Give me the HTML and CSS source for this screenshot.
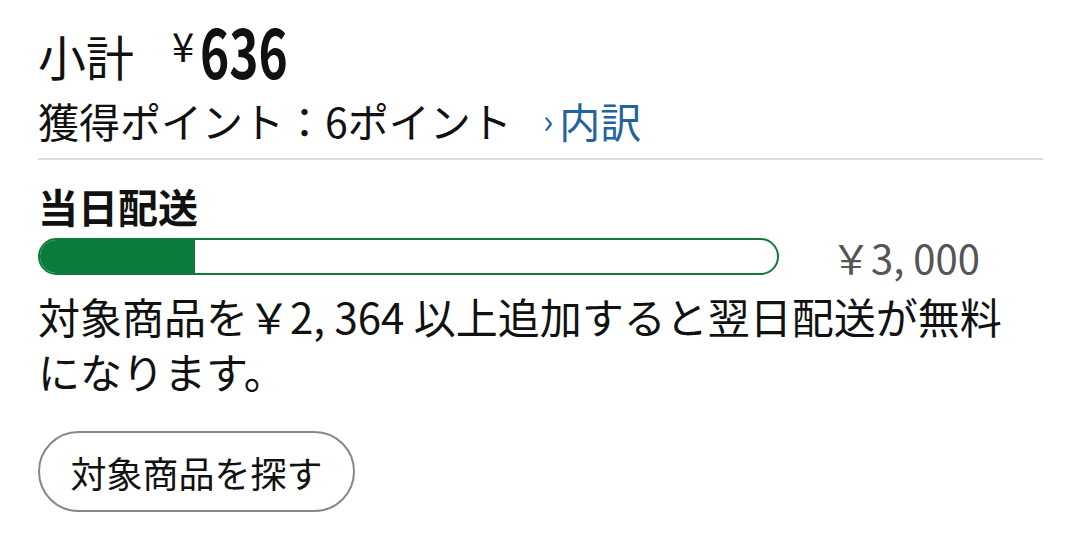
FILE: index.html
```html
<!DOCTYPE html>
<html lang="ja">
<head>
  <meta charset="UTF-8" />
  <meta name="viewport" content="width=device-width, initial-scale=1" />
  <title>カート</title>
  <link rel="stylesheet" href="styles.css">
</head>
<body>
  <div class="cart-summary">
    <div class="subtotal">
      <span class="subtotal-label">小計</span>
      <span class="subtotal-price"><span class="yen">¥</span><span class="amount">636</span></span>
    </div>
    <div class="points">
      獲得ポイント：6ポイント
      <a class="points-link" href="#"><span class="chevron">›</span>内訳</a>
    </div>

    <hr class="divider">

    <div class="delivery">
      <div class="delivery-title">当日配送</div>
      <div class="progress-row">
        <div class="progress">
          <div class="progress-fill" style="width: 21%"></div>
        </div>
        <div class="progress-goal">￥3, 000</div>
      </div>
      <p class="delivery-note">
        対象商品を￥2, 364 以上追加すると翌日配送が無料になります。
      </p>
      <button class="find-button" type="button">対象商品を探す</button>
    </div>
  </div>
</body>
</html>
```

FILE: styles.css
```css
html, body {
  margin: 0;
  background: #fff;
  color: #111;
  font-family: "Noto Sans CJK JP", "Noto Sans", sans-serif;
}

.cart-summary {
  padding: 13px 37px 0 38px;
}

.subtotal {
  font-size: 48px;
  line-height: 64px;
  display: flex;
  align-items: baseline;
}

.subtotal-price {
  margin-left: 38px;
  font-weight: 700;
}

.subtotal-price .yen {
  font-size: 40px;
  font-weight: 400;
  vertical-align: 14px;
  margin-right: 6px;
}

/* narrow digits for the total */
.subtotal-price .amount {
  display: inline-block;
  font-size: 68px;
  line-height: 64px;
  transform: scaleX(0.73);
  transform-origin: left center;
  margin-right: -30px;
  position: relative;
  top: 3px;
}

.points {
  margin-top: 7px;
  font-size: 41px;
  line-height: 52px;
  white-space: nowrap;
}

.points-link {
  color: #22629f;
  text-decoration: none;
  margin-left: 22px;
}

.chevron {
  font-size: 34px;
  margin-right: 6px;
  vertical-align: 4px;
}

.divider {
  border: none;
  border-top: 2px solid #dcdcdc;
  margin: 12px 0 0;
}

.delivery-title {
  margin-top: 22px;
  font-size: 40px;
  font-weight: 700;
  line-height: 48px;
}

.progress-row {
  margin-top: 2px;
  display: flex;
  align-items: center;
  gap: 52px;
}

.progress {
  width: 741px;
  height: 37px;
  box-sizing: border-box;
  border: 2px solid #0f7a3b;
  border-radius: 999px;
  overflow: hidden;
}

.progress-fill {
  height: 100%;
  background: #0b7b3c;
}

.progress-goal {
  font-size: 40px;
  color: #555;
  line-height: 46px;
  margin-top: 2px;
}

.delivery-note {
  margin: 8px 0 0;
  font-size: 42px;
  line-height: 55px;
  width: 980px;
}

.find-button {
  margin-top: 33px;
  width: 317px;
  height: 81px;
  border: 2px solid #888;
  border-radius: 999px;
  background: #fff;
  color: #111;
  font-family: inherit;
  font-size: 36px;
  padding: 0;
}
```
